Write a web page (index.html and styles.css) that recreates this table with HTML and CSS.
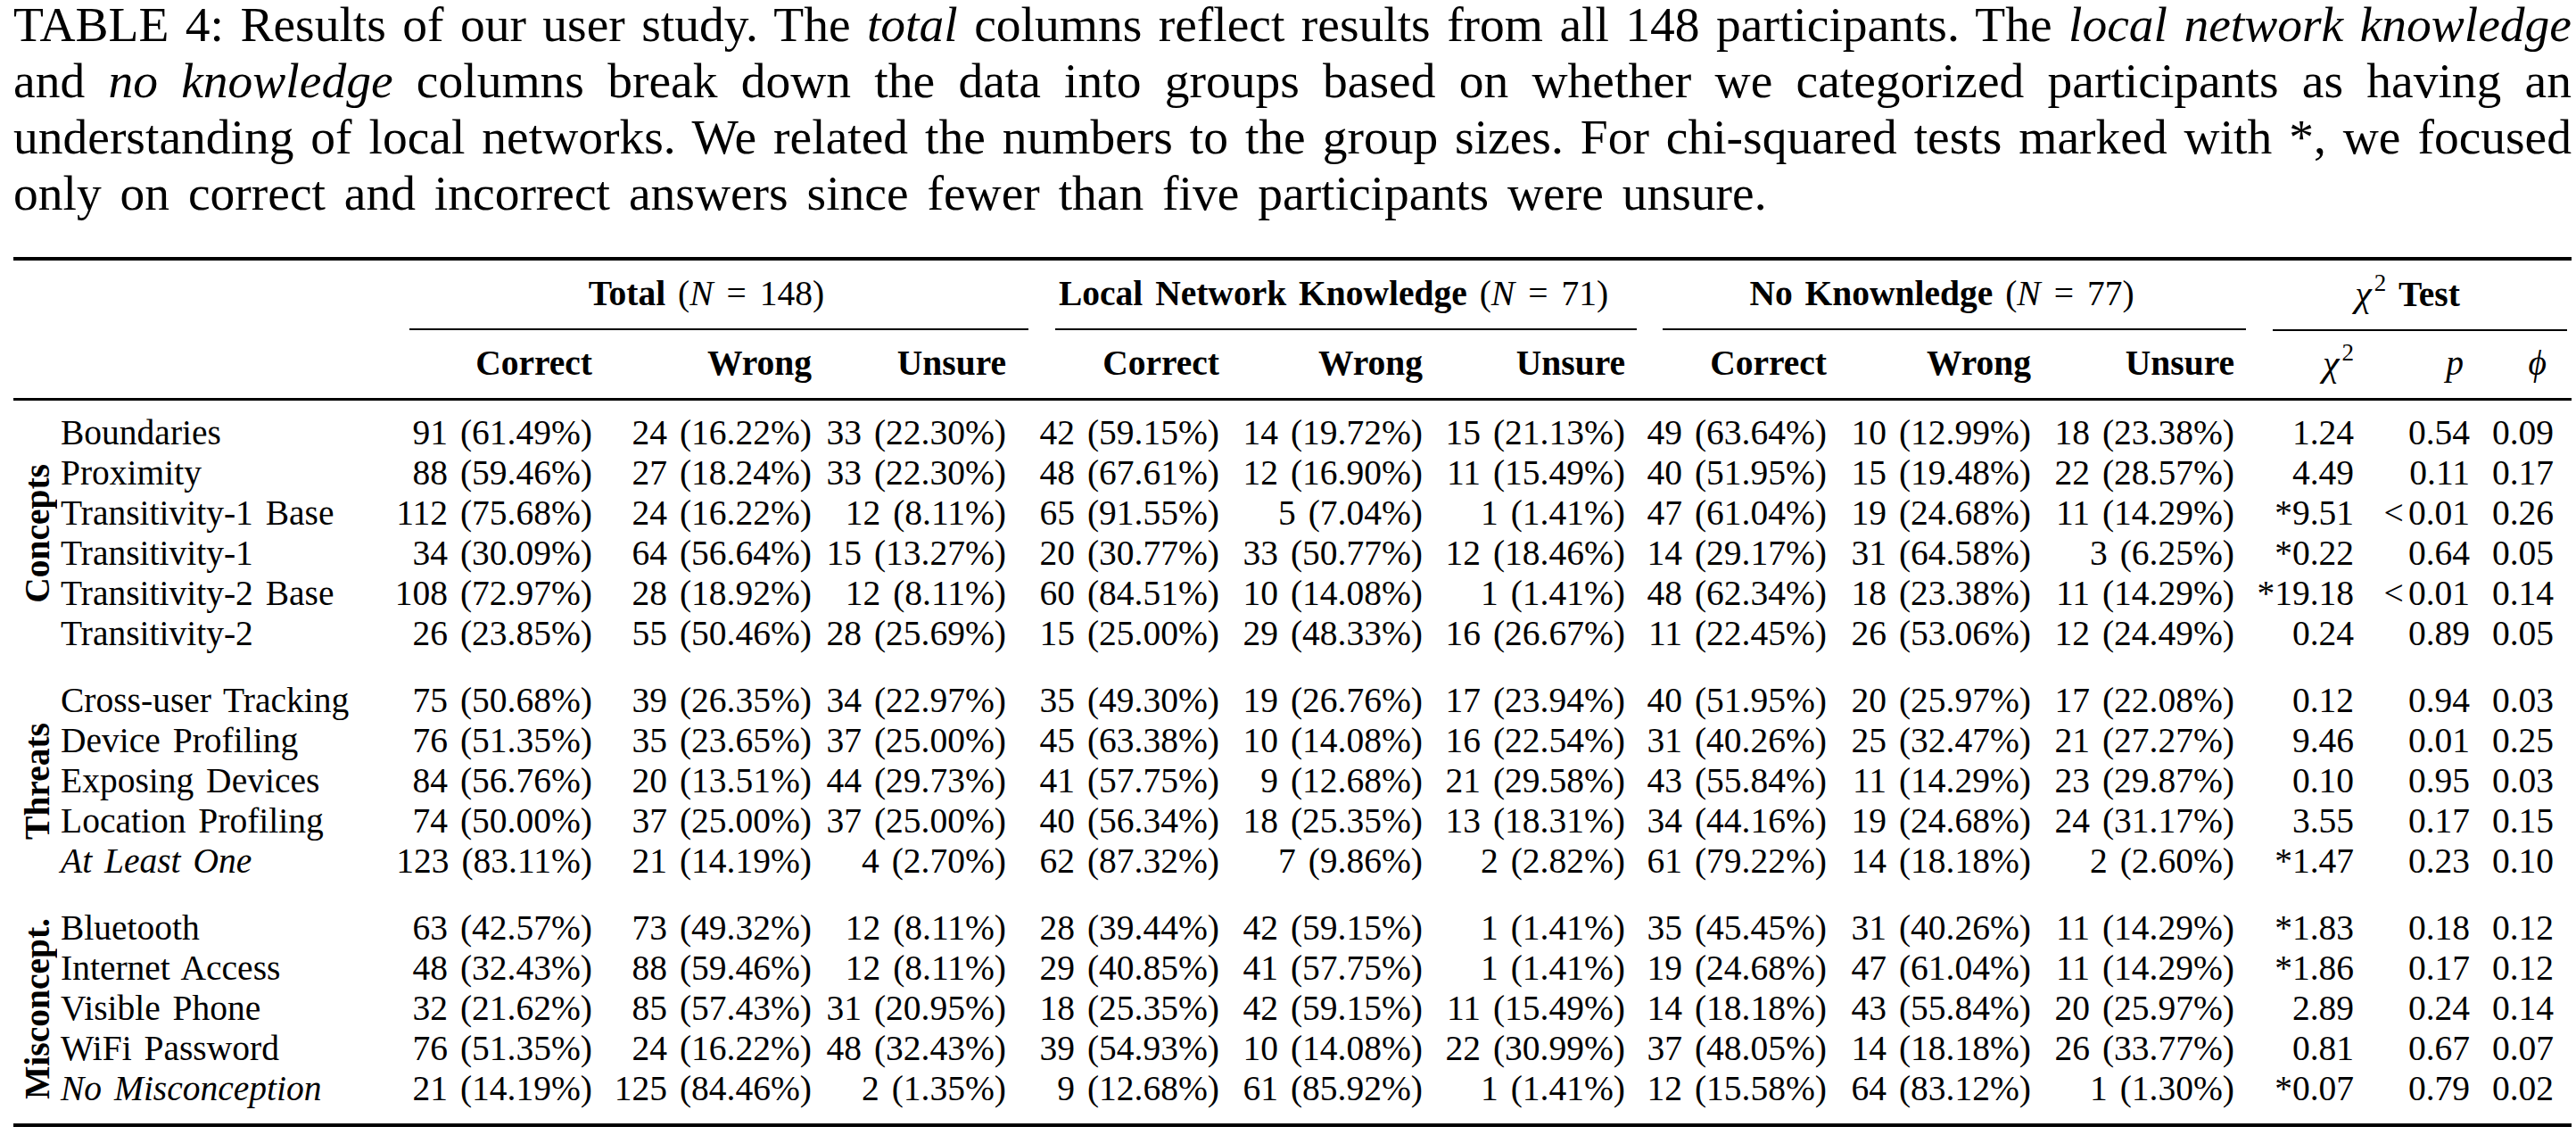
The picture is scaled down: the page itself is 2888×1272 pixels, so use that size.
FILE: index.html
```html
<!DOCTYPE html>
<html>
<head>
<meta charset="utf-8">
<link rel="stylesheet" href="styles.css">
</head>
<body>
<div class="page">
  <div class="caption">
    <div class="cl">TABLE 4: Results of our user study. The <i>total</i> columns reflect results from all 148 participants. The <i>local network knowledge</i></div>
    <div class="cl">and <i>no knowledge</i> columns break down the data into groups based on whether we categorized participants as having an</div>
    <div class="cl">understanding of local networks. We related the numbers to the group sizes. For chi-squared tests marked with *, we focused</div>
    <div class="cl last">only on correct and incorrect answers since fewer than five participants were unsure.</div>
  </div>

  <div class="tbl">
    <div class="hdr1">
      <div></div>
      <div class="gcell"><div class="grp g-total"><span class="gt"><b>Total</b> (<i class="m">N</i><span class="eq">=</span>148)</span></div></div>
      <div class="gcell"><div class="grp g-lnk"><span class="gt"><b>Local Network Knowledge</b> (<i class="m">N</i><span class="eq">=</span>71)</span></div></div>
      <div class="gcell"><div class="grp g-nk"><span class="gt"><b>No Knownledge</b> (<i class="m">N</i><span class="eq">=</span>77)</span></div></div>
      <div class="gcell"><div class="grp g-chi"><span class="gt"><i class="m chi">χ</i><sup>2</sup> <b>Test</b></span></div></div>
    </div>

    <div class="hdr2">
      <div></div>
      <div class="hc">Correct</div>
      <div class="hc">Wrong</div>
      <div class="hc">Unsure</div>
      <div class="hc">Correct</div>
      <div class="hc">Wrong</div>
      <div class="hc">Unsure</div>
      <div class="hc">Correct</div>
      <div class="hc">Wrong</div>
      <div class="hc">Unsure</div>
      <div class="hm"><i class="m chi">χ</i><sup>2</sup></div>
      <div class="hm p"><i class="m">p</i></div>
      <div class="hm phi"><i class="m">ϕ</i></div>
    </div>

    <div class="body">
      <div class="group">
        <div class="glabel"><span>Concepts</span></div>
        <div class="rows">
          <div class="row"><div class="lab">Boundaries</div><div>91 (61.49%)</div><div>24 (16.22%)</div><div>33 (22.30%)</div><div>42 (59.15%)</div><div>14 (19.72%)</div><div>15 (21.13%)</div><div>49 (63.64%)</div><div>10 (12.99%)</div><div>18 (23.38%)</div><div>1.24</div><div>0.54</div><div>0.09</div></div>
          <div class="row"><div class="lab">Proximity</div><div>88 (59.46%)</div><div>27 (18.24%)</div><div>33 (22.30%)</div><div>48 (67.61%)</div><div>12 (16.90%)</div><div>11 (15.49%)</div><div>40 (51.95%)</div><div>15 (19.48%)</div><div>22 (28.57%)</div><div>4.49</div><div>0.11</div><div>0.17</div></div>
          <div class="row"><div class="lab">Transitivity-1 Base</div><div>112 (75.68%)</div><div>24 (16.22%)</div><div>12 (8.11%)</div><div>65 (91.55%)</div><div>5 (7.04%)</div><div>1 (1.41%)</div><div>47 (61.04%)</div><div>19 (24.68%)</div><div>11 (14.29%)</div><div>*9.51</div><div><span class="lt">&lt;</span>0.01</div><div>0.26</div></div>
          <div class="row"><div class="lab">Transitivity-1</div><div>34 (30.09%)</div><div>64 (56.64%)</div><div>15 (13.27%)</div><div>20 (30.77%)</div><div>33 (50.77%)</div><div>12 (18.46%)</div><div>14 (29.17%)</div><div>31 (64.58%)</div><div>3 (6.25%)</div><div>*0.22</div><div>0.64</div><div>0.05</div></div>
          <div class="row"><div class="lab">Transitivity-2 Base</div><div>108 (72.97%)</div><div>28 (18.92%)</div><div>12 (8.11%)</div><div>60 (84.51%)</div><div>10 (14.08%)</div><div>1 (1.41%)</div><div>48 (62.34%)</div><div>18 (23.38%)</div><div>11 (14.29%)</div><div>*19.18</div><div><span class="lt">&lt;</span>0.01</div><div>0.14</div></div>
          <div class="row"><div class="lab">Transitivity-2</div><div>26 (23.85%)</div><div>55 (50.46%)</div><div>28 (25.69%)</div><div>15 (25.00%)</div><div>29 (48.33%)</div><div>16 (26.67%)</div><div>11 (22.45%)</div><div>26 (53.06%)</div><div>12 (24.49%)</div><div>0.24</div><div>0.89</div><div>0.05</div></div>
        </div>
      </div>

      <div class="gap"></div>

      <div class="group">
        <div class="glabel"><span>Threats</span></div>
        <div class="rows">
          <div class="row"><div class="lab">Cross-user Tracking</div><div>75 (50.68%)</div><div>39 (26.35%)</div><div>34 (22.97%)</div><div>35 (49.30%)</div><div>19 (26.76%)</div><div>17 (23.94%)</div><div>40 (51.95%)</div><div>20 (25.97%)</div><div>17 (22.08%)</div><div>0.12</div><div>0.94</div><div>0.03</div></div>
          <div class="row"><div class="lab">Device Profiling</div><div>76 (51.35%)</div><div>35 (23.65%)</div><div>37 (25.00%)</div><div>45 (63.38%)</div><div>10 (14.08%)</div><div>16 (22.54%)</div><div>31 (40.26%)</div><div>25 (32.47%)</div><div>21 (27.27%)</div><div>9.46</div><div>0.01</div><div>0.25</div></div>
          <div class="row"><div class="lab">Exposing Devices</div><div>84 (56.76%)</div><div>20 (13.51%)</div><div>44 (29.73%)</div><div>41 (57.75%)</div><div>9 (12.68%)</div><div>21 (29.58%)</div><div>43 (55.84%)</div><div>11 (14.29%)</div><div>23 (29.87%)</div><div>0.10</div><div>0.95</div><div>0.03</div></div>
          <div class="row"><div class="lab">Location Profiling</div><div>74 (50.00%)</div><div>37 (25.00%)</div><div>37 (25.00%)</div><div>40 (56.34%)</div><div>18 (25.35%)</div><div>13 (18.31%)</div><div>34 (44.16%)</div><div>19 (24.68%)</div><div>24 (31.17%)</div><div>3.55</div><div>0.17</div><div>0.15</div></div>
          <div class="row"><div class="lab"><i>At Least One</i></div><div>123 (83.11%)</div><div>21 (14.19%)</div><div>4 (2.70%)</div><div>62 (87.32%)</div><div>7 (9.86%)</div><div>2 (2.82%)</div><div>61 (79.22%)</div><div>14 (18.18%)</div><div>2 (2.60%)</div><div>*1.47</div><div>0.23</div><div>0.10</div></div>
        </div>
      </div>

      <div class="gap"></div>

      <div class="group">
        <div class="glabel"><span>Misconcept.</span></div>
        <div class="rows">
          <div class="row"><div class="lab">Bluetooth</div><div>63 (42.57%)</div><div>73 (49.32%)</div><div>12 (8.11%)</div><div>28 (39.44%)</div><div>42 (59.15%)</div><div>1 (1.41%)</div><div>35 (45.45%)</div><div>31 (40.26%)</div><div>11 (14.29%)</div><div>*1.83</div><div>0.18</div><div>0.12</div></div>
          <div class="row"><div class="lab">Internet Access</div><div>48 (32.43%)</div><div>88 (59.46%)</div><div>12 (8.11%)</div><div>29 (40.85%)</div><div>41 (57.75%)</div><div>1 (1.41%)</div><div>19 (24.68%)</div><div>47 (61.04%)</div><div>11 (14.29%)</div><div>*1.86</div><div>0.17</div><div>0.12</div></div>
          <div class="row"><div class="lab">Visible Phone</div><div>32 (21.62%)</div><div>85 (57.43%)</div><div>31 (20.95%)</div><div>18 (25.35%)</div><div>42 (59.15%)</div><div>11 (15.49%)</div><div>14 (18.18%)</div><div>43 (55.84%)</div><div>20 (25.97%)</div><div>2.89</div><div>0.24</div><div>0.14</div></div>
          <div class="row"><div class="lab">WiFi Password</div><div>76 (51.35%)</div><div>24 (16.22%)</div><div>48 (32.43%)</div><div>39 (54.93%)</div><div>10 (14.08%)</div><div>22 (30.99%)</div><div>37 (48.05%)</div><div>14 (18.18%)</div><div>26 (33.77%)</div><div>0.81</div><div>0.67</div><div>0.07</div></div>
          <div class="row"><div class="lab"><i>No Misconception</i></div><div>21 (14.19%)</div><div>125 (84.46%)</div><div>2 (1.35%)</div><div>9 (12.68%)</div><div>61 (85.92%)</div><div>1 (1.41%)</div><div>12 (15.58%)</div><div>64 (83.12%)</div><div>1 (1.30%)</div><div>*0.07</div><div>0.79</div><div>0.02</div></div>
        </div>
      </div>
    </div>
  </div>
</div>
</body>
</html>
```

FILE: styles.css
```css
* {
  box-sizing: border-box;
  margin: 0;
  padding: 0;
}

html, body {
  background: #ffffff;
}

body {
  font-family: "Liberation Serif", "Times New Roman", "DejaVu Serif", serif;
  color: #000000;
  overflow: hidden;
}

.page {
  width: 2888px;
  padding: 0 5px 0 15px;
}

/* ---------- caption ---------- */
.caption {
  font-size: 55.5px;
  line-height: 63px;
  margin-top: -4px;
  width: 2868px;
}

.cl {
  text-align: justify;
  text-align-last: justify;
}

.cl.last {
  text-align-last: left;
  word-spacing: 7px;
}

/* ---------- table ---------- */
.tbl {
  margin-top: 40px;
  width: 2868px;
  border-top: 4px solid #000;
  border-bottom: 4px solid #000;
  font-size: 39.5px;
  line-height: 45px;
  word-spacing: 4px;
}

.m {
  font-style: italic;
}

.chi {
  font-size: 42px;
}

.eq {
  margin: 0 15px;
}

sup {
  font-size: 27px;
  line-height: 0;
  vertical-align: 17px;
  margin-left: 3px;
}

.lt {
  margin-right: 5px;
}

/* header row 1 : spanning group titles */
.hdr1 {
  display: grid;
  grid-template-columns: 403px 710px 694px 683px 378px;
  padding-top: 15px;
}

.grp {
  display: flex;
  justify-content: center;
  border-bottom: 2px solid #000;
  padding-bottom: 16px;
  white-space: nowrap;
}

.gt {
  margin-right: 28px;
}

.g-total {
  margin: 0 -25px 0 41px;
}

.g-lnk {
  margin: 0 -13px 0 55px;
}

.g-nk {
  margin: 0 -13px 0 42px;
}

.g-chi {
  margin: 0 5px 0 43px;
}

/* header row 2 : column titles */
.hdr2 {
  display: grid;
  grid-template-columns: 403px 246px 246px 218px 239px 228px 227px 226px 229px 228px 134px 130px 94px 20px;
  padding-top: 14px;
  padding-bottom: 15px;
  border-bottom: 3px solid #000;
}

.hc {
  text-align: right;
  font-weight: bold;
  white-space: nowrap;
}

.hm {
  text-align: right;
  white-space: nowrap;
}

.hm.p {
  padding-right: 7px;
}

.hm.phi {
  padding-right: 8px;
}

/* body */
.body {
  padding-top: 14px;
  padding-bottom: 16px;
}

.group {
  display: flex;
}

.glabel {
  width: 53px;
  flex: none;
  display: flex;
  align-items: center;
  justify-content: center;
}

.glabel span {
  writing-mode: vertical-rl;
  transform: rotate(180deg);
  font-weight: bold;
  line-height: 38px;
  white-space: nowrap;
  word-spacing: 0;
}

.rows {
  flex: 1;
}

.row {
  display: grid;
  grid-template-columns: 350px 246px 246px 218px 239px 228px 227px 226px 229px 228px 134px 130px 94px 20px;
  height: 45px;
  white-space: nowrap;
}

.row > div {
  text-align: right;
}

.row > .lab {
  text-align: left;
}

.gap {
  height: 30px;
}
```
